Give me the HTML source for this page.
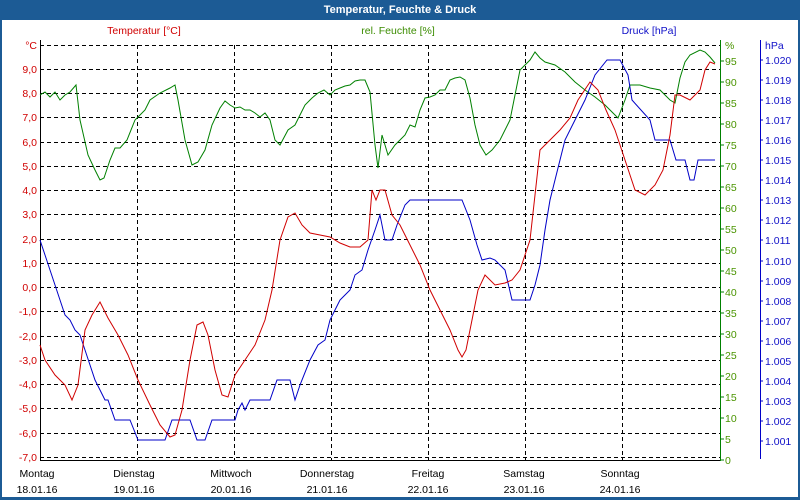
<!DOCTYPE html>
<html><head><meta charset="utf-8"><style>
html,body{margin:0;padding:0;background:#fff}
svg{display:block;font-family:"Liberation Sans",sans-serif;font-size:10.5px}
</style></head><body>
<svg width="800" height="500" viewBox="0 0 800 500">
<rect x="0" y="0" width="800" height="500" fill="#1c5b95"/>
<rect x="2" y="20" width="796" height="477" fill="#fff"/>
<text x="400" y="13" text-anchor="middle" fill="#fff" font-weight="bold" font-size="11">Temperatur, Feuchte &amp; Druck</text>
<text x="144" y="34" text-anchor="middle" fill="#d00000">Temperatur [°C]</text>
<text x="398" y="34" text-anchor="middle" fill="#3b8c00">rel. Feuchte [%]</text>
<text x="649" y="34" text-anchor="middle" fill="#1010c8">Druck [hPa]</text>
<g stroke="#000" stroke-dasharray="4,3" stroke-width="1">
<line x1="40" y1="45.5" x2="720" y2="45.5"/>
<line x1="40" y1="69.5" x2="720" y2="69.5"/><line x1="40" y1="93.5" x2="720" y2="93.5"/>
<line x1="40" y1="117.5" x2="720" y2="117.5"/><line x1="40" y1="142.5" x2="720" y2="142.5"/>
<line x1="40" y1="166.5" x2="720" y2="166.5"/><line x1="40" y1="190.5" x2="720" y2="190.5"/>
<line x1="40" y1="214.5" x2="720" y2="214.5"/><line x1="40" y1="239.5" x2="720" y2="239.5"/>
<line x1="40" y1="263.5" x2="720" y2="263.5"/><line x1="40" y1="287.5" x2="720" y2="287.5"/>
<line x1="40" y1="311.5" x2="720" y2="311.5"/><line x1="40" y1="336.5" x2="720" y2="336.5"/>
<line x1="40" y1="360.5" x2="720" y2="360.5"/><line x1="40" y1="384.5" x2="720" y2="384.5"/>
<line x1="40" y1="408.5" x2="720" y2="408.5"/><line x1="40" y1="433.5" x2="720" y2="433.5"/>
<line x1="40" y1="457.5" x2="720" y2="457.5"/>
<line x1="137.5" y1="45" x2="137.5" y2="460"/><line x1="234.5" y1="45" x2="234.5" y2="460"/>
<line x1="331.5" y1="45" x2="331.5" y2="460"/><line x1="428.5" y1="45" x2="428.5" y2="460"/>
<line x1="525.5" y1="45" x2="525.5" y2="460"/><line x1="622.5" y1="45" x2="622.5" y2="460"/>
</g>
<line x1="40.5" y1="40" x2="40.5" y2="461" stroke="#000"/>
<line x1="40" y1="460.5" x2="720" y2="460.5" stroke="#000"/>
<line x1="720.5" y1="40" x2="720.5" y2="461" stroke="#008000"/>
<line x1="760.5" y1="40" x2="760.5" y2="459" stroke="#0000c8"/>
<g fill="#d00000" text-anchor="end">
<text x="37" y="49">°C</text><text x="37" y="73">9,0</text><text x="37" y="97">8,0</text><text x="37" y="121">7,0</text><text x="37" y="146">6,0</text><text x="37" y="170">5,0</text><text x="37" y="194">4,0</text><text x="37" y="218">3,0</text><text x="37" y="243">2,0</text><text x="37" y="267">1,0</text><text x="37" y="291">0,0</text><text x="37" y="315">-1,0</text><text x="37" y="340">-2,0</text><text x="37" y="364">-3,0</text><text x="37" y="388">-4,0</text><text x="37" y="412">-5,0</text><text x="37" y="437">-6,0</text><text x="37" y="461">-7,0</text>
</g>
<g fill="#4a9400">
<text x="725" y="49">%</text>
<text x="725" y="65">95</text><text x="725" y="86">90</text><text x="725" y="107">85</text><text x="725" y="128">80</text><text x="725" y="149">75</text><text x="725" y="170">70</text><text x="725" y="191">65</text><text x="725" y="212">60</text><text x="725" y="233">55</text><text x="725" y="254">50</text><text x="725" y="275">45</text><text x="725" y="296">40</text><text x="725" y="317">35</text><text x="725" y="338">30</text><text x="725" y="359">25</text><text x="725" y="380">20</text><text x="725" y="401">15</text><text x="725" y="422">10</text><text x="725" y="443">5</text><text x="725" y="464">0</text>
</g>
<g stroke="#008000"><path d="M720 61h4M720 82h4M720 103h4M720 124h4M720 145h4M720 166h4M720 187h4M720 208h4M720 229h4M720 250h4M720 271h4M720 292h4M720 313h4M720 334h4M720 355h4M720 376h4M720 397h4M720 418h4M720 439h4M720 460h4"/></g>
<g stroke="#0000c8"><path d="M760 60h3M760 80h3M760 100h3M760 120h3M760 140h3M760 160h3M760 180h3M760 200h3M760 220h3M760 240h3M760 261h3M760 281h3M760 301h3M760 321h3M760 341h3M760 361h3M760 381h3M760 401h3M760 421h3M760 441h3"/></g>
<g fill="#1010c8">
<text x="765" y="49">hPa</text>
<text x="765" y="64">1.020</text><text x="765" y="84">1.019</text><text x="765" y="104">1.018</text><text x="765" y="124">1.017</text><text x="765" y="144">1.016</text><text x="765" y="164">1.015</text><text x="765" y="184">1.014</text><text x="765" y="204">1.013</text><text x="765" y="224">1.012</text><text x="765" y="244">1.011</text><text x="765" y="265">1.010</text><text x="765" y="285">1.009</text><text x="765" y="305">1.008</text><text x="765" y="325">1.007</text><text x="765" y="345">1.006</text><text x="765" y="365">1.005</text><text x="765" y="385">1.004</text><text x="765" y="405">1.003</text><text x="765" y="425">1.002</text><text x="765" y="445">1.001</text>
</g>
<g fill="none" stroke-width="1">
<polyline stroke="#008000" points="40,95 45,92 50,97 55,92 60,100 65,95 70,92 76,85 80,120 88,155 95,170 100,180 104,178 110,160 115,148 120,148 127,140 135,120 140,115 145,110 150,100 160,93 170,88 175,85 178,100 185,140 192,165 198,162 205,150 212,125 220,108 225,101 230,105 235,108 240,107 245,110 250,110 255,113 260,117 265,113 270,120 275,140 280,145 288,130 295,125 300,115 305,105 312,98 318,93 324,90 330,95 335,90 340,88 345,86 350,85 355,81 360,80 365,80 370,92 375,145 378,168 382,135 388,155 395,145 400,140 405,135 410,125 415,127 420,110 425,98 430,97 435,95 440,90 445,90 450,80 455,78 460,77 465,80 470,98 475,125 480,145 486,155 492,150 500,140 510,120 515,95 520,70 530,60 535,52 540,58 545,62 555,65 565,72 575,82 585,90 595,97 605,105 612,112 618,118 625,100 630,85 640,85 650,88 660,90 670,100 675,103 680,78 685,62 690,55 700,50 705,52 710,57 715,63"/>
<polyline stroke="#0000c8" points="40,240 45,255 50,270 55,285 60,300 65,315 70,320 75,330 80,335 85,350 90,365 95,380 100,390 105,400 108,400 115,420 130,420 138,440 165,440 172,420 190,420 197,440 205,440 212,420 235,420 238,410 242,403 245,410 250,400 270,400 277,380 290,380 295,400 300,385 310,360 318,345 325,340 330,320 335,310 340,300 345,295 350,290 355,275 362,270 368,250 375,230 380,215 385,240 392,240 397,225 405,205 410,200 462,200 470,220 477,245 482,260 490,258 495,260 505,270 512,300 530,300 535,285 540,265 545,230 550,200 555,180 560,160 565,140 575,120 585,100 595,75 607,60 620,60 628,75 632,100 650,120 655,140 670,140 676,160 685,160 690,180 694,180 698,160 715,160"/>
<polyline stroke="#d00000" points="40,345 45,360 55,375 65,385 72,400 78,385 85,330 92,315 100,302 108,318 118,335 128,355 138,380 150,405 160,425 170,437 175,435 182,410 190,360 197,325 203,322 208,335 215,370 222,395 228,397 235,375 245,360 255,345 265,320 272,290 280,240 288,217 295,213 302,225 310,233 320,235 330,237 340,243 350,247 360,247 368,240 372,190 376,200 380,190 385,190 392,215 400,225 410,245 420,265 430,290 440,310 450,330 458,350 462,357 466,350 472,320 478,290 485,275 495,285 505,283 512,280 520,270 530,240 540,150 550,140 560,130 570,118 578,100 590,82 598,90 606,110 615,130 625,160 635,190 645,195 655,185 663,170 670,135 675,95 680,95 690,100 700,90 705,70 710,62 715,64"/>
</g>
<g fill="#000" text-anchor="middle">
<text x="37" y="477">Montag</text><text x="37" y="493">18.01.16</text>
<text x="134" y="477">Dienstag</text><text x="134" y="493">19.01.16</text>
<text x="231" y="477">Mittwoch</text><text x="231" y="493">20.01.16</text>
<text x="327" y="477">Donnerstag</text><text x="327" y="493">21.01.16</text>
<text x="428" y="477">Freitag</text><text x="428" y="493">22.01.16</text>
<text x="524" y="477">Samstag</text><text x="524" y="493">23.01.16</text>
<text x="620" y="477">Sonntag</text><text x="620" y="493">24.01.16</text>
</g>
</svg>
</body></html>
